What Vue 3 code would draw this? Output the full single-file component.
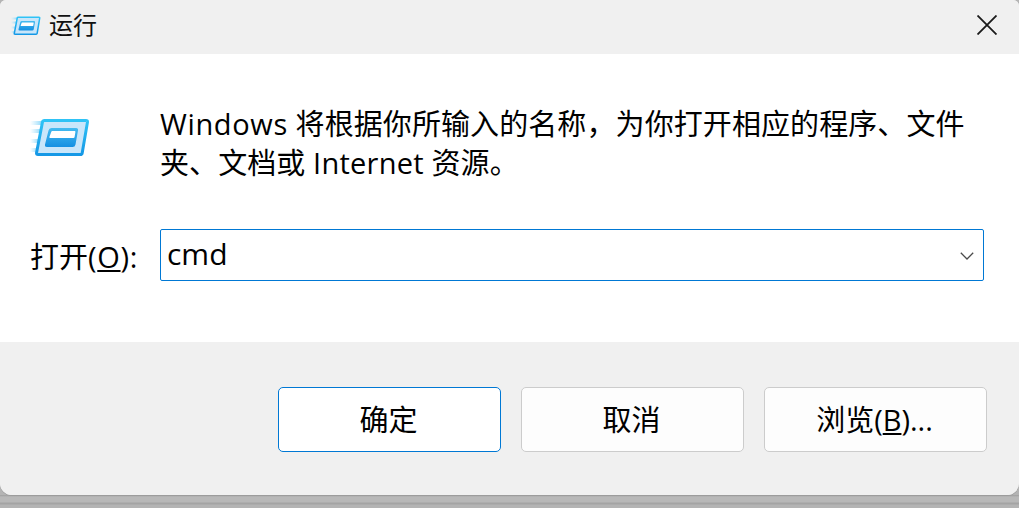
<script setup>
const buttons = [
  { key: 'ok', before: '确定', mnemonic: '', after: '', primary: true },
  { key: 'cancel', before: '取消', mnemonic: '', after: '' },
  { key: 'browse', before: '浏览(', mnemonic: 'B', after: ')...' },
]
</script>

<template>
  <div class="page">
    <svg class="icon-defs" width="0" height="0">
      <defs>
        <linearGradient id="frameGrad" x1="0" y1="0" x2="0" y2="1">
          <stop offset="0" stop-color="#2fc3f6" />
          <stop offset="1" stop-color="#1598e6" />
        </linearGradient>
        <linearGradient id="paneGrad" x1="0" y1="0" x2="0" y2="1">
          <stop offset="0" stop-color="#45bbf0" />
          <stop offset="1" stop-color="#1590e2" />
        </linearGradient>
        <linearGradient id="fadeGrad" x1="0" y1="0" x2="1" y2="0">
          <stop offset="0" stop-color="#a8e2fb" stop-opacity="0" />
          <stop offset="1" stop-color="#8fd8fa" />
        </linearGradient>
        <symbol id="runIcon" viewBox="0 0 60 38">
          <rect x="0" y="3" width="12" height="4" fill="url(#fadeGrad)" />
          <rect x="0" y="11" width="11" height="4" fill="url(#fadeGrad)" />
          <rect x="0" y="21" width="9" height="4" fill="url(#fadeGrad)" />
          <rect x="0" y="30" width="8" height="4" fill="url(#fadeGrad)" />
          <path d="M12.500 4Q12.800 2.500 14.500 2.500H56Q57.700 2.500 57.500 4L52.200 35Q52 36.500 50.300 36.500H8Q6.300 36.500 6.500 35Z" fill="#c9e6fa" stroke="url(#frameGrad)" stroke-width="3" />
          <path d="M18.500 12.500Q19 10 21.500 10H46Q48.500 10 48 12.500L45.500 26.500Q45 29 42.500 29H17Q14.500 29 15 26.500Z" fill="url(#paneGrad)" />
          <path d="M21.200 14Q21.400 13 22.400 13H44.600Q45.600 13 45.400 14L44.600 19Q44.400 20 43.400 20H20.200Q19.200 20 19.400 19Z" fill="#fff" />
        </symbol>
      </defs>
    </svg>
    <div class="run-dialog">
      <header class="title-bar">
        <svg class="run-icon small"><use href="#runIcon" /></svg>
        <span class="title-text">运行</span>
        <svg class="close-icon" viewBox="0 0 20 20">
          <path d="M0.500 0.500L19.500 19.500M19.500 0.500L0.500 19.500" stroke="#1a1a1a" stroke-width="1.800" fill="none" />
        </svg>
      </header>

      <main class="body">
        <div class="message-row">
          <svg class="run-icon large"><use href="#runIcon" /></svg>
          <p class="message"><span class="latin">Windows</span> 将根据你所输入的名称，为你打开相应的程序、文件夹、文档或 <span class="latin-b">Internet</span> 资源。</p>
        </div>
        <div class="open-row">
          <label class="open-label">打开<span class="paren">(<u>O</u>):</span></label>
          <div class="combo">
            <span class="combo-value">cmd</span>
            <svg class="chevron" viewBox="0 0 14 8">
              <path d="M0.800 0.800L7 7L13.200 0.800" stroke="#4a4a4a" stroke-width="1.300" fill="none" />
            </svg>
          </div>
        </div>
      </main>

      <footer class="footer">
        <button
          v-for="btn in buttons"
          :key="btn.key"
          class="btn"
          :class="{ primary: btn.primary }"
        >{{ btn.before }}<u v-if="btn.mnemonic">{{ btn.mnemonic }}</u>{{ btn.after }}</button>
      </footer>
    </div>
  </div>
</template>

<style>
html, body { margin: 0; padding: 0; background: #b4b4b4; overflow: hidden; }
</style>

<style scoped>
.page {
  width: 1019px;
  height: 508px;
  overflow: hidden;
  background: linear-gradient(#9e9e9e 0, #b8b8b8 2px, #b8b8b8 7px, #a4a4a4 8px, #a4a4a4 9px, #b4b4b4 10px) 0 495px / 100% 13px no-repeat, #b4b4b4;
  font-family: "Open Sans", "Noto Sans CJK SC", sans-serif;
  color: #000;
}
.icon-defs { display: block; height: 0; }
.run-dialog {
  width: 1019px;
  height: 495px;
  display: flex;
  flex-direction: column;
  background: #f0f0f0;
  border-radius: 6px 6px 12px 12px;
  box-shadow: 0 1px 0 #9c9c9c;
  overflow: hidden;
}
.title-bar {
  height: 54px;
  box-sizing: border-box;
  flex: none;
  display: flex;
  align-items: center;
  padding: 0 22px 6px 11px;
  background: #f0f0f0;
}
.run-icon { display: block; flex: none; }
.run-icon.small { width: 30px; height: 19px; margin-top: 2px; }
.run-icon.large { width: 60px; height: 38px; margin: 14px 70px 0 30px; }
.title-text {
  margin-left: 8px;
  font-size: 24px;
  line-height: 32px;
  color: #111;
  font-family: "Noto Sans CJK SC", sans-serif;
}
.close-icon { width: 20px; height: 20px; margin-left: auto; margin-top: 1px; }
.body {
  flex: none;
  height: 288px;
  box-sizing: border-box;
  background: #fff;
  padding-top: 50px;
}
.message-row { display: flex; align-items: flex-start; }
.message {
  margin: 0;
  width: 820px;
  font-size: 29px;
  line-height: 39px;
  letter-spacing: .09px;
}
.latin { letter-spacing: .65px; }
.latin-b { letter-spacing: .25px; }
.open-row {
  display: flex;
  align-items: center;
  margin-top: 47px;
}
.open-label {
  width: 130px;
  margin-left: 30px;
  padding-top: 3px;
  font-size: 29px;
  line-height: 40px;
}
.paren { letter-spacing: .7px; }
.combo {
  width: 824px;
  height: 52px;
  box-sizing: border-box;
  border: 1px solid #0078d4;
  border-radius: 2px;
  display: flex;
  align-items: center;
  justify-content: space-between;
  padding: 0 9px 0 6px;
  background: #fff;
}
.combo-value { font-size: 30px; line-height: 46px; margin-top: -2px; }
.chevron { width: 14px; height: 8px; margin-top: 1px; }
.footer {
  flex: 1;
  display: flex;
  justify-content: flex-end;
  gap: 20px;
  padding: 45px 32px 0 0;
  background: #f0f0f0;
}
.btn {
  width: 223px;
  height: 65px;
  box-sizing: border-box;
  padding: 0 2px 3px 0;
  background: #fdfdfd;
  border: 1px solid #cccccc;
  border-radius: 5px;
  font: inherit;
  font-size: 29px;
  color: #000;
}
.btn.primary {
  border-color: #0078d4;
  background: #fff;
}
</style>
